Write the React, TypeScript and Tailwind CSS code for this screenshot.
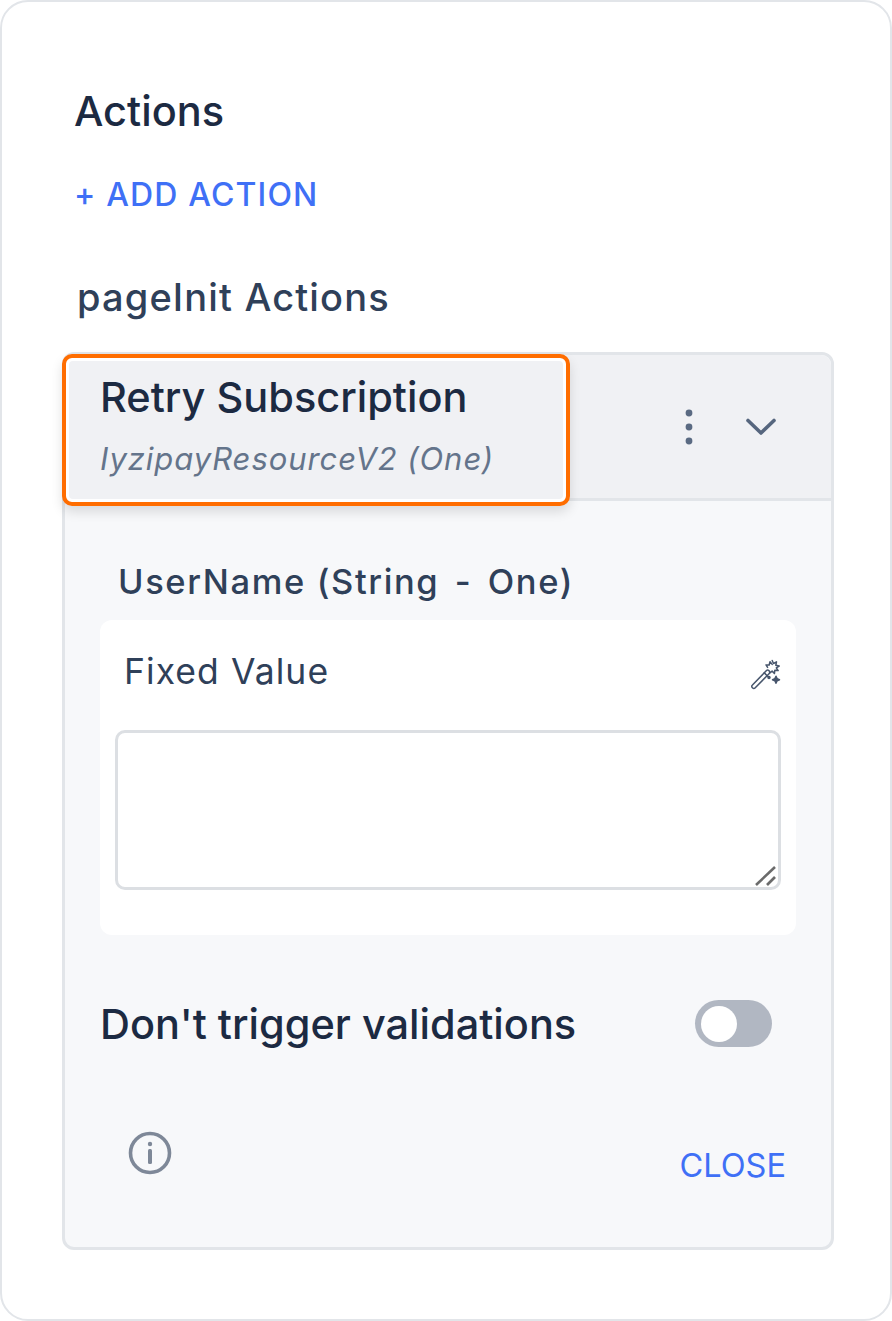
import React from "react";

function Wand() {
  return (
    <svg width="34" height="34" viewBox="0 0 34 34" fill="none" stroke="#47556c" strokeWidth="1.5" strokeLinejoin="round" strokeLinecap="round">
      <path d="M3.2 27.2 17.5 12.6a1.6 1.6 0 0 1 2.3 0l.5.5a1.6 1.6 0 0 1 0 2.3L6 30a1.6 1.6 0 0 1-2.3 0l-.5-.5a1.6 1.6 0 0 1 0-2.3Z" />
      <path d="M15.3 14.9l3.6 3.6" />
      <path d="M23.2 2.5l1.3 3 3-1.6-.7 3.4 3.4.7-2.9 1.9 1.9 2.7-3.4-.3-.4 3.3-2.3-2.5-2.6 2" />
      <path d="M18.6 9.4l-1.6-2.5 3.2.1.8-3.3 2.2 2.7" />
      <path d="M27 18.2l1.1 2.4 2.4 1.1-2.4 1.1-1.1 2.4-1.1-2.4-2.4-1.1 2.4-1.1Z" fill="#47556c" />
      <circle cx="20" cy="19.5" r="1" fill="#47556c" />
    </svg>
  );
}

export default function App() {
  return (
    <div className="w-[892px] h-[1321px] bg-white font-['Inter',sans-serif] text-[#1e293b]">
      <div className="w-full h-full border-2 border-[#e2e5e9] rounded-[28px] pl-[60px] pr-[56px] pt-[86px]">
        <h2 className="pl-3 text-[41.5px] leading-[46px] font-medium text-[#1c2a42]">Actions</h2>
        <div className="pl-3 mt-[41px] text-[32px] leading-[40px] font-medium tracking-[0.036em] text-[#3f70f6]">+ ADD ACTION</div>
        <div className="pl-[15px] mt-[60px] text-[38px] leading-[44px] font-medium tracking-[0.03em] text-[#2f4059]">pageInit Actions</div>

        <div className="mt-[33px] relative w-[772px] h-[898px] rounded-[12px] border-[3px] border-[#e2e5e9] bg-[#f7f8fa] flex flex-col">
          <div className="relative h-[146px] shrink-0 bg-[#f0f1f4] rounded-t-[10px] border-b-[3px] border-[#e2e5e9] flex items-center justify-end pr-[55px] gap-[52px]">
            <svg width="10" height="38" viewBox="0 0 10 38" fill="#5a6a82">
              <circle cx="5" cy="5" r="3.4" />
              <circle cx="5" cy="19" r="3.4" />
              <circle cx="5" cy="33" r="3.4" />
            </svg>
            <svg width="30" height="18" viewBox="0 0 30 18" fill="none" stroke="#56667e" strokeWidth="3.6" strokeLinecap="round" strokeLinejoin="round">
              <path d="M2 2.5 15 15 28 2.5" />
            </svg>
          </div>

          <div className="absolute left-[-3px] top-[-1px] w-[508px] h-[152px] rounded-[10px] border-[4px] border-[#ff6d00] bg-white p-[3px] shadow-[0_6px_12px_rgba(0,0,0,0.12)]">
            <div className="h-full w-full rounded-[4px] bg-[#f0f1f4] pl-[31px] pt-[13px]">
              <div className="text-[41.5px] leading-[46px] font-medium text-[#1c2a42]">Retry Subscription</div>
              <div className="mt-[20px] text-[31px] leading-[38px] italic tracking-[0.03em] text-[#64748b]">IyzipayResourceV2 (One)</div>
            </div>
          </div>

          <div className="flex-1 flex flex-col px-[35px]">
            <div className="pl-[18px] mt-[59px] text-[34.5px] leading-[44px] font-medium tracking-[0.047em] text-[#2f4059]">{"UserName (String\u200a - \u200aOne)"}</div>
            <div className="mt-[16px] h-[315px] w-[696px] bg-white rounded-[12px] pl-[15px] pr-[15px] pt-[31px] flex flex-col">
              <div className="flex justify-between items-start">
                <span className="pl-[9px] text-[35.5px] leading-[42px] tracking-[0.03em] text-[#2f4059]">Fixed Value</span>
                <span className="mt-[7px] mr-[-2px]"><Wand /></span>
              </div>
              <div className="relative mt-[37px] h-[160px] w-[666px] rounded-[10px] border-[3px] border-[#dcdfe3] bg-white">
                <svg width="22" height="20" viewBox="0 0 22 20" fill="none" stroke="#6b6b6b" strokeWidth="2.6" className="absolute right-[1px] bottom-[1px]">
                  <path d="M1 19 20 1" />
                  <path d="M12 19 20 11" />
                </svg>
              </div>
            </div>
            <div className="mt-[65px] flex items-center justify-between pr-[24px]">
              <span className="text-[41.5px] leading-[49px] font-medium text-[#1c2a42]">Don't trigger validations</span>
              <div className="-mt-[2px] w-[77px] h-[47px] rounded-full bg-[#b1b7c2] flex items-center pl-[6px]">
                <div className="w-[36px] h-[36px] rounded-full bg-white" />
              </div>
            </div>
            <div className="mt-[81px] flex items-start justify-between pr-[10px]">
              <svg width="44" height="44" viewBox="0 0 44 44" fill="none" className="ml-[28px] mt-[1px]">
                <circle cx="22" cy="22" r="19.5" stroke="#7e8898" strokeWidth="3.6" />
                <circle cx="22" cy="13" r="2.2" fill="#7e8898" />
                <rect x="20" y="18" width="4" height="15" rx="1.5" fill="#7e8898" />
              </svg>
              <span className="mt-[16px] text-[32.5px] leading-[40px] font-normal text-[#3f70f6]">CLOSE</span>
            </div>
          </div>
        </div>
      </div>
    </div>
  );
}
